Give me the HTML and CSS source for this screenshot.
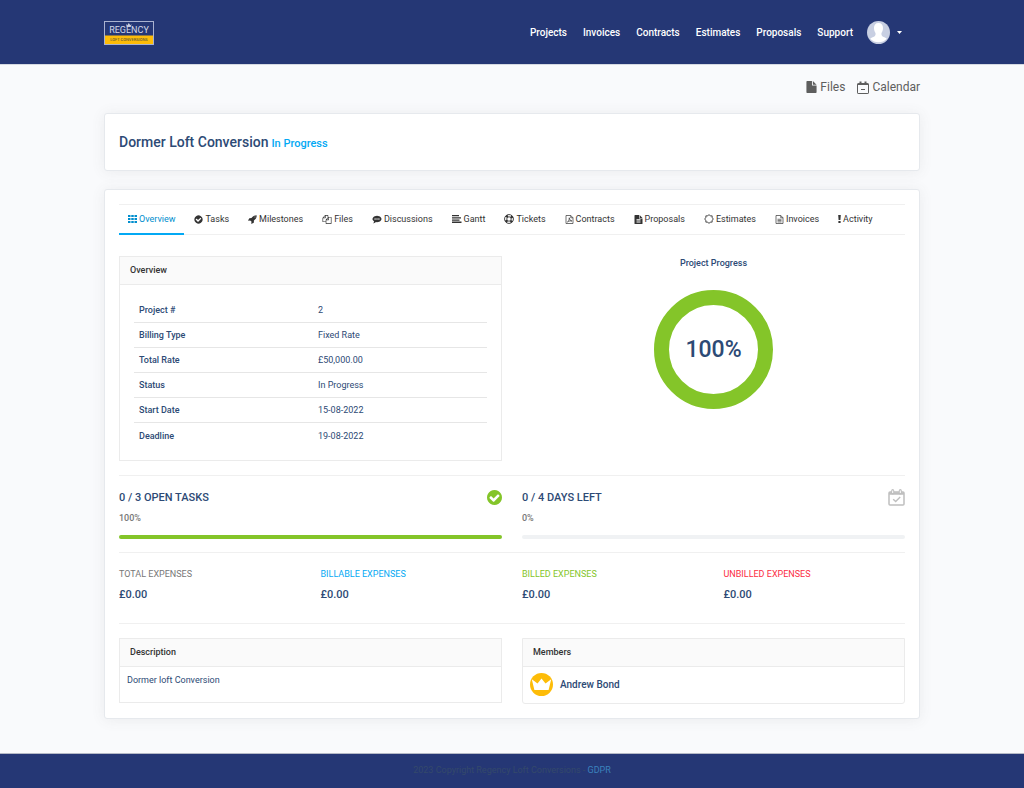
FILE: index.html
```
<!DOCTYPE html>
<html lang="en">
<head>
<meta charset="utf-8">
<meta name="viewport" content="width=device-width, initial-scale=1">
<title>Dormer Loft Conversion</title>
<link rel="stylesheet" href="styles.css">
</head>
<body>
<header class="site-header">
  <div class="container header-row">
    <a class="logo" href="#" aria-label="Regency Loft Conversions">
      <svg width="50" height="24" viewBox="0 0 50 24">
        <rect x="0.5" y="0.5" width="49" height="23" fill="#253775" stroke="#a9b2d0"/>
        <rect x="1" y="14.500" width="48" height="8.500" fill="#fdbc08"/>
        <path d="M22 3l1.300 1.200L24.800 2l1.500 2.200L27.600 3l-.6 2.500h-4.400z" fill="#c9cede"/>
        <text x="25" y="12" class="logo-name">REGENCY</text>
        <text x="25" y="20" class="logo-sub">LOFT CONVERSIONS</text>
      </svg>
    </a>
    <nav class="main-nav">
      <a href="#">Projects</a>
      <a href="#">Invoices</a>
      <a href="#">Contracts</a>
      <a href="#">Estimates</a>
      <a href="#">Proposals</a>
      <a href="#">Support</a>
      <button class="profile" type="button" aria-label="Profile menu">
        <svg width="23" height="23" viewBox="0 0 23 23">
          <circle cx="11.500" cy="11.500" r="11.500" fill="#c8cfe2"/>
          <path d="M11.500 2c3.200 0 4.600 2.200 4.500 5.200-.1 2.200-.7 3.600-1.500 4.800-.3 2 .1 3 1.600 3.700 1.900.8 3 1.200 3.700 2A11.500 11.500 0 0 1 3.200 17.700c.7-.8 1.800-1.200 3.700-2 1.500-.7 1.900-1.700 1.600-3.700C7.700 10.800 7.100 9.400 7 7.200 6.900 4.200 8.300 2 11.500 2z" fill="#fff"/>
        </svg>
        <svg width="5" height="3" viewBox="0 0 5 3"><path d="M0 0h5L2.500 3z" fill="#fff"/></svg>
      </button>
    </nav>
  </div>
</header>

<main class="container">
  <nav class="quick-links">
    <a href="#"><svg width="11" height="12" viewBox="0 0 11 13"><path d="M0 .8Q0 0 .8 0H6v4.200q0 .8.8.8H11v7.200q0 .8-.8.8H.8q-.8 0-.8-.8zM7 0l4 4H7z" fill="#5e5e5e"/></svg>Files</a>
    <a href="#"><svg width="12" height="13" viewBox="0 0 12 13" fill="none" stroke="#5e5e5e"><rect x=".5" y="2.500" width="11" height="10" rx=".6"/><path d="M.5 3.500h11M4 8.500h4"/><path d="M3.500 .6v2.600M8.500 .6v2.600" stroke-width="2"/></svg>Calendar</a>
  </nav>

  <section class="card title-card">
    <h1>Dormer Loft Conversion</h1>
    <span class="state">In Progress</span>
  </section>

  <section class="card">
    <nav class="tabs">
      <a class="active" href="#"><svg width="9" height="8" viewBox="0 0 9 8"><path d="M0 0h2.500v2H0zM3.250 0h2.500v2h-2.500zM6.500 0H9v2H6.500zM0 3h2.500v2H0zM3.250 3h2.500v2h-2.500zM6.500 3H9v2H6.500zM0 6h2.500v2H0zM3.250 6h2.500v2h-2.500zM6.500 6H9v2H6.500z"/></svg>Overview</a>
      <a href="#"><svg width="9" height="9" viewBox="64 64 1664 1664"><path d="M1412 734q0-28-18-46l-91-90q-19-19-45-19t-45 19l-408 407-226-226q-19-19-45-19t-45 19l-91 90q-18 18-18 46 0 27 18 45l362 362q19 19 45 19 27 0 46-19l543-543q18-18 18-45zm252 162q0 209-103 385.500t-279.500 279.500-385.500 103-385.500-103-279.500-279.500-103-385.500 103-385.500 279.500-279.500 385.500-103 385.500 103 279.500 279.500 103 385.500z"/></svg>Tasks</a>
      <a href="#"><svg width="9" height="9" viewBox="0 64 1728 1728"><path d="M1440 448q0-40-28-68t-68-28-68 28-28 68 28 68 68 28 68-28 28-68zm224-288q0 249-75.500 430.500t-253.500 360.500q-81 80-195 176l-20 379q-2 16-16 26l-384 224q-7 4-16 4-12 0-23-9l-64-64q-13-14-8-32l85-276-281-281-276 85q-3 1-9 1-14 0-23-9l-64-64q-17-19-5-39l224-384q10-14 26-16l379-20q96-114 176-195 188-187 358-258t431-71q14 0 24 9.500t10 22.500z"/></svg>Milestones</a>
      <a href="#"><svg width="10" height="9" viewBox="0 0 1792 1792"><path d="M1696 384q40 0 68 28t28 68v1216q0 40-28 68t-68 28h-960q-40 0-68-28t-28-68v-288h-544q-40 0-68-28t-28-68v-672q0-40 20-88t48-76l408-408q28-28 76-48t88-20h416q40 0 68 28t28 68v328q68-40 128-40h416zm-544 213l-299 299h299v-299zm-640-384l-299 299h299v-299zm196 647l316-316v-416h-384v416q0 40-28 68t-68 28h-416v640h512v-256q0-40 20-88t48-76zm956 804v-1152h-384v416q0 40-28 68t-68 28h-416v640h896z"/></svg>Files</a>
      <a href="#"><svg width="10" height="9" viewBox="0 100 1792 1792"><path d="M640 896q0-53-37.500-90.500t-90.500-37.500-90.500 37.500-37.500 90.500 37.500 90.500 90.500 37.500 90.500-37.500 37.500-90.500zm384 0q0-53-37.500-90.500t-90.500-37.500-90.500 37.500-37.500 90.500 37.500 90.500 90.500 37.500 90.500-37.500 37.500-90.500zm384 0q0-53-37.500-90.500t-90.500-37.500-90.500 37.500-37.500 90.500 37.500 90.500 90.500 37.500 90.500-37.500 37.500-90.500zm384 0q0 174-120 321.500t-326 233-450 85.500q-110 0-211-18-173 173-435 229-52 10-86 13-12 1-22-6t-13-18q-4-15 20-37 5-5 23.500-21.500t25.500-23.500 23.500-25.500 24-31.500 20.500-37 20-48 14.500-57.500 12.500-72.500q-146-90-229.500-216.500t-83.500-269.500q0-174 120-321.500t326-233 450-85.500 450 85.500 326 233 120 321.500z"/></svg>Discussions</a>
      <a href="#"><svg width="10" height="8" viewBox="0 0 10 8"><path d="M0 0h7v1.300H0zM0 2.200h9v1.300H0zM0 4.400h7.500v1.300H0zM0 6.600h9.500v1.300H0z"/></svg>Gantt</a>
      <a href="#"><svg width="10" height="10" viewBox="0 0 18 18" fill="none" stroke="currentColor"><circle cx="9" cy="9" r="8" stroke-width="1.600"/><circle cx="9" cy="9" r="4" stroke-width="1.600"/><circle cx="9" cy="9" r="6" stroke-width="4" stroke-dasharray="4 5.425" stroke-dashoffset="-2.710"/></svg>Tickets</a>
      <a href="#"><svg width="9" height="9" viewBox="0 0 16 18" fill="none" stroke="currentColor" stroke-width="1.400"><path d="M1 1h9.500L15 5.500V17H1zM10.500 1v4.500H15"/><path d="M3.500 14.500C6 13 8 9 7.500 5.500 8 9 9.500 11.500 13 12c-3-.6-6 .2-8.500 1.300"/></svg>Contracts</a>
      <a href="#"><svg width="9" height="9" viewBox="0 0 16 18"><path fill-rule="evenodd" d="M0 1q0-1 1-1h8v6q0 1 1 1h6v10q0 1-1 1H1q-1 0-1-1zM10.200 0L16 5.800h-5.800zM4 8.500V10h8V8.500zM4 11v1.500h8V11zM4 13.500V15h8v-1.500z"/></svg>Proposals</a>
      <a href="#"><svg width="10" height="10" viewBox="0 0 18 18" fill="none" stroke="currentColor" stroke-width="1.600" stroke-linejoin="round"><path d="M9 1l2.300 2.460 3.360-.12-.12 3.360L17 9l-2.460 2.300.12 3.360-3.360-.12L9 17l-2.300-2.460-3.360.12.120-3.360L1 9l2.460-2.300-.12-3.360 3.360.12z"/></svg>Estimates</a>
      <a href="#"><svg width="9" height="9" viewBox="0 0 16 18" fill="none" stroke="currentColor" stroke-width="1.400"><path d="M1 1h9.500L15 5.500V17H1zM10.500 1v4.500H15M4 8.500h8M4 11.200h8M4 13.900h8"/></svg>Invoices</a>
      <a href="#"><svg width="3" height="8" viewBox="0 0 3 8"><path d="M.2 0h2.600l-.4 5H.6zM.4 5.900h2.200V8H.4z"/></svg>Activity</a>
    </nav>

    <div class="columns overview-row">
      <section class="panel">
        <h2>Overview</h2>
        <table class="facts">
          <tbody>
            <tr><th scope="row">Project #</th><td>2</td></tr>
            <tr><th scope="row">Billing Type</th><td>Fixed Rate</td></tr>
            <tr><th scope="row">Total Rate</th><td>£50,000.00</td></tr>
            <tr><th scope="row">Status</th><td>In Progress</td></tr>
            <tr><th scope="row">Start Date</th><td>15-08-2022</td></tr>
            <tr><th scope="row">Deadline</th><td>19-08-2022</td></tr>
          </tbody>
        </table>
      </section>
      <section class="progress">
        <h2>Project Progress</h2>
        <div class="ring">100%</div>
      </section>
    </div>

    <div class="columns stats">
      <section>
        <div class="stat-head">
          <h3>0 / 3 OPEN TASKS</h3>
          <svg width="15" height="15" viewBox="128 128 1536 1536"><path fill="#84c529" d="M1412 734q0-28-18-46l-91-90q-19-19-45-19t-45 19l-408 407-226-226q-19-19-45-19t-45 19l-91 90q-18 18-18 46 0 27 18 45l362 362q19 19 45 19 27 0 46-19l543-543q18-18 18-45zm252 162q0 209-103 385.500t-279.500 279.500-385.500 103-385.500-103-279.500-279.500-103-385.500 103-385.500 279.500-279.500 385.500-103 385.500 103 279.500 279.500 103 385.500z"/></svg>
        </div>
        <p>100%</p>
        <div class="bar"><div class="bar-fill" style="width:100%"></div></div>
      </section>
      <section>
        <div class="stat-head">
          <h3>0 / 4 DAYS LEFT</h3>
          <svg width="17" height="17" viewBox="0 0 17 17" fill="none" stroke="#bfbfbf"><rect x="1" y="3" width="15" height="13" rx="1" stroke-width="1.500"/><path d="M1 4.500h15" stroke-width="2.500"/><path d="M4.700 1.500v2.600M12.300 1.500v2.600" stroke-width="3" stroke-linecap="round"/><path d="M4.700 1.500v2.500M12.300 1.500v2.500" stroke="#fff"/><path d="M5.200 10.200l2.500 2.400 4.500-4.500" stroke-width="1.400"/></svg>
        </div>
        <p>0%</p>
        <div class="bar"><div class="bar-fill" style="width:0%"></div></div>
      </section>
    </div>

    <dl class="expenses">
      <div><dt>TOTAL EXPENSES</dt><dd>£0.00</dd></div>
      <div><dt class="info">BILLABLE EXPENSES</dt><dd>£0.00</dd></div>
      <div><dt class="success">BILLED EXPENSES</dt><dd>£0.00</dd></div>
      <div><dt class="danger">UNBILLED EXPENSES</dt><dd>£0.00</dd></div>
    </dl>

    <div class="columns details">
      <section class="panel">
        <h2>Description</h2>
        <p class="description">Dormer loft Conversion</p>
      </section>
      <section class="panel members">
        <h2>Members</h2>
        <div class="member">
          <svg width="23" height="23" viewBox="0 0 23 23"><circle cx="11.500" cy="11.500" r="11.500" fill="#fdbc08"/><path d="M1.800 6.200l5.700 4.200 4-5 4 5 5.700-4.200-2.600 10.800H4.400z" fill="#fff"/></svg>
          <a href="#">Andrew Bond</a>
        </div>
      </section>
    </div>
  </section>
</main>

<footer class="site-footer">2023 Copyright Regency Loft Conversions - <a href="#">GDPR</a></footer>
</body>
</html>
```
FILE: styles.css
```
* {
  box-sizing: border-box;
}

body {
  margin: 0;
  min-height: 100vh;
  display: flex;
  flex-direction: column;
  background: #f9fafc;
  color: #2d4a75;
  font: 9px/14px Roboto, "Liberation Sans", sans-serif;
}

h1, h2, h3, p, dl, dd {
  margin: 0;
  font-weight: 500;
}

a {
  color: inherit;
  text-decoration: none;
}

svg {
  display: block;
  flex: none;
}

.container {
  width: calc(100% - 16px);
  max-width: 816px;
  margin: 0 auto;
}

.site-header {
  background: #253775;
  border-bottom: 1px solid #d5d9e2;
}

.header-row {
  padding-top: 1px;
  height: 64px;
  display: flex;
  align-items: center;
  justify-content: space-between;
}

.logo-name {
  fill: #d3d8e8;
  font-size: 9px;
  text-anchor: middle;
}

.logo-sub {
  fill: #6b5c35;
  font-size: 4px;
  font-weight: 500;
  text-anchor: middle;
}

.main-nav {
  display: flex;
  align-items: center;
  gap: 16px;
  color: #fff;
  font-size: 10px;
  font-weight: 500;
}

.profile {
  display: flex;
  align-items: center;
  gap: 7px;
  margin: 0 18px 0 -2px;
  padding: 0;
  border: 0;
  background: none;
}

.quick-links {
  display: flex;
  justify-content: flex-end;
  gap: 12px;
  padding: 14px 0;
  color: #5e5e5e;
  font-size: 12px;
  line-height: 16px;
}

.quick-links a {
  display: flex;
  align-items: center;
  gap: 3px;
}

.card {
  margin: 4px 0 18px;
  padding: 14px;
  border: 1px solid #e6e9ed;
  border-radius: 3px;
  background: #fff;
  box-shadow: 0 1px 14px rgba(90, 90, 90, 0.09);
}

.title-card {
  display: flex;
  align-items: baseline;
  gap: 3px;
  padding: 19px 14px;
}

h1 {
  font-size: 14px;
  line-height: 18px;
}

.state {
  color: #03a9f4;
  font-size: 11px;
  font-weight: 500;
}

.tabs {
  display: flex;
  gap: 1px;
  border-top: 1px solid #f0f0f0;
  border-bottom: 1px solid #f0f0f0;
  color: #333;
}

.tabs a {
  display: flex;
  align-items: center;
  gap: 2px;
  padding: 7px 9px;
  border-bottom: 2px solid transparent;
  margin-bottom: -1px;
}

.tabs svg:not([fill]) {
  fill: currentColor;
}

.tabs .active {
  color: #008ece;
  border-color: #03a9f4;
}

.columns {
  display: grid;
  grid-template-columns: 1fr 1fr;
  gap: 20px;
  align-items: start;
}

.overview-row {
  padding: 21px 0 14px;
}

.panel {
  border: 1px solid #ebebeb;
}

.panel h2 {
  padding: 6px 10px;
  line-height: 15px;
  border-bottom: 1px solid #ebebeb;
  background: #fafafa;
  color: #333;
  font-size: 9px;
}

.facts {
  width: calc(100% - 28px);
  margin: 13px 14px 12px;
  border-spacing: 0;
  table-layout: fixed;
}

.facts th,
.facts td {
  height: 25px;
  padding: 0 5px;
  border-bottom: 1px solid #e6e6e6;
  text-align: left;
}

.facts th {
  width: 179px;
  font-weight: 500;
}

.facts tr:last-child > * {
  border-bottom: 0;
}

.progress {
  display: flex;
  flex-direction: column;
  align-items: center;
}

.progress h2 {
  font-size: 9px;
}

.ring {
  display: grid;
  place-items: center;
  width: 119px;
  height: 119px;
  margin-top: 20px;
  border: 15px solid #84c529;
  border-radius: 50%;
  font-size: 23px;
  font-weight: 500;
}

.stats {
  padding: 13px 0;
  border-top: 1px solid #f0f0f0;
}

.stat-head {
  display: flex;
  justify-content: space-between;
  align-items: center;
  height: 17px;
}

h3 {
  font-size: 11px;
}

.stats p {
  padding: 5px 0 10px;
  color: #777;
}

.bar {
  height: 4px;
  border-radius: 2px;
  background: #f0f2f4;
  overflow: hidden;
}

.bar-fill {
  height: 100%;
  background: #84c529;
}

.expenses {
  display: grid;
  grid-template-columns: repeat(4, 1fr);
  gap: 20px;
  padding: 14px 0 21px;
  border: 1px solid #f0f0f0;
  border-width: 1px 0;
}

.expenses dt {
  color: #777;
  font-weight: 400;
}

.expenses dd {
  padding-top: 7px;
  font-size: 11px;
}

.expenses .info {
  color: #03a9f4;
}

.expenses .success {
  color: #84c529;
}

.expenses .danger {
  color: #fc2d42;
}

.details {
  padding-top: 14px;
}

.description {
  padding: 6px 7px 15px;
  font-weight: 400;
}

.members {
  border-radius: 0 0 3px 3px;
}

.member {
  display: flex;
  align-items: center;
  gap: 7px;
  padding: 6px 7px 7px;
  font-size: 10px;
  font-weight: 500;
}

.site-footer {
  margin-top: auto;
  padding: 9px 0 11px;
  border-top: 1px solid #b5b9c6;
  background: #253775;
  color: #34496b;
  text-align: center;
}

.site-footer a {
  color: #3b82bd;
}
```
